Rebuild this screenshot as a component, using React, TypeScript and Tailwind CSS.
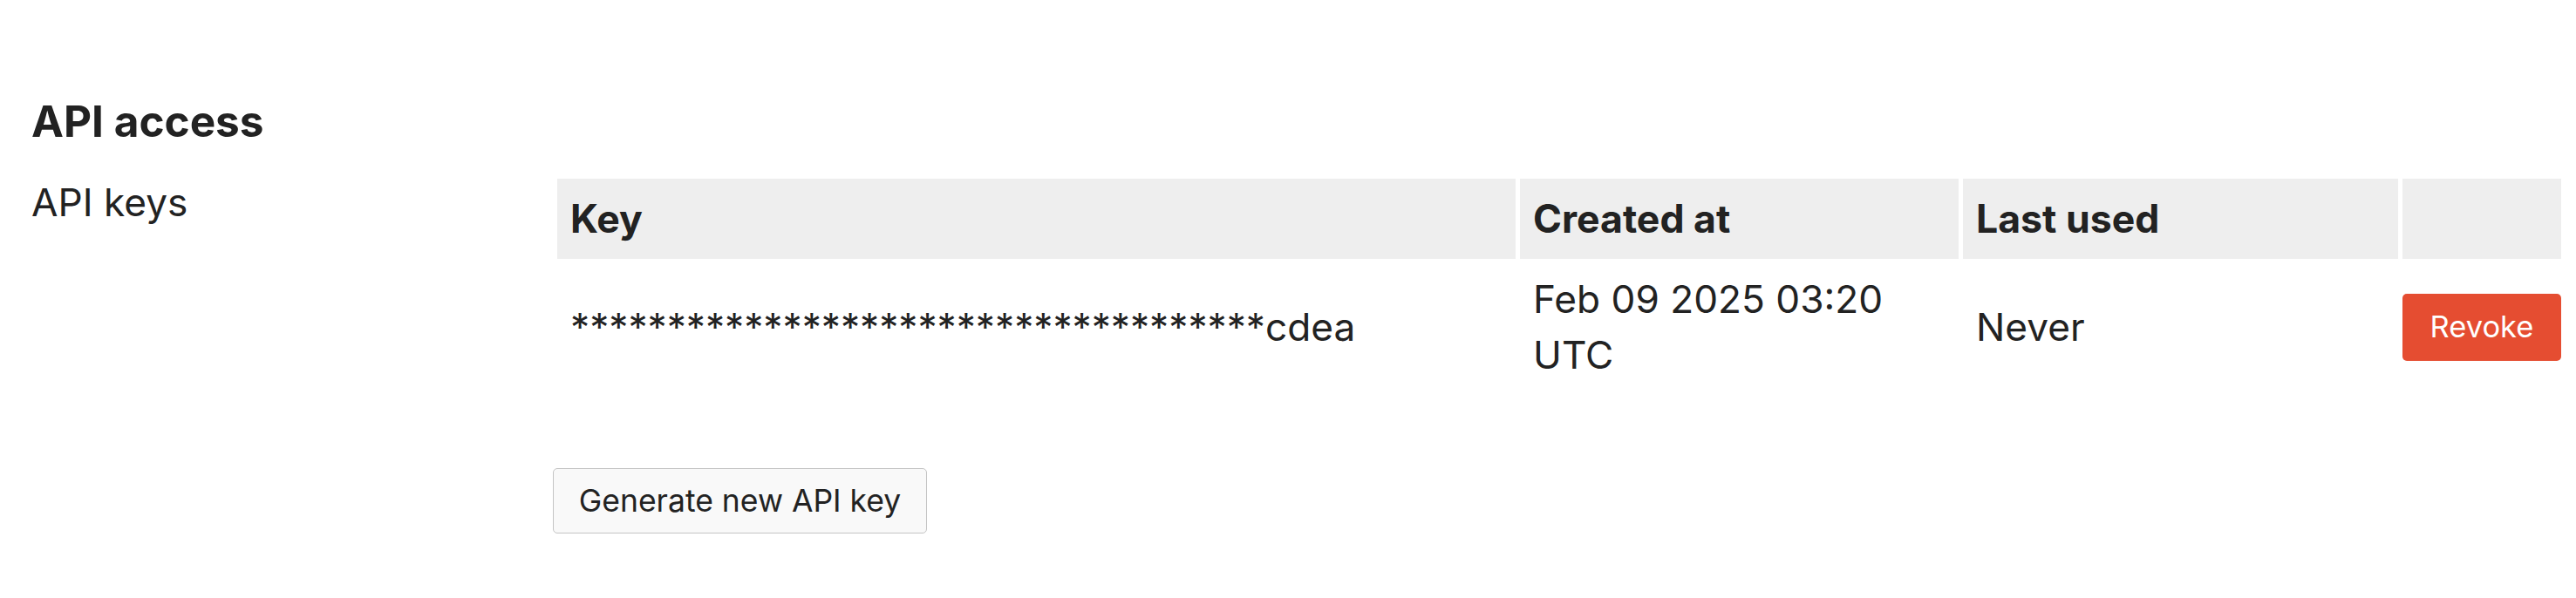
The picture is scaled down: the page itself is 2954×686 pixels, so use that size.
import React from "react";

export default function App() {
  const masked = "*".repeat(36) + "cdea";
  return (
    <div
      className="w-[2954px] min-h-[686px] bg-white text-[#222222] pl-[36px] pr-[12px] pt-[109px]"
      style={{ fontFamily: "Inter, 'Noto Sans', sans-serif" }}
    >
      <h2 className="text-[49.5px] leading-[60px] font-bold">API access</h2>
      <div className="mt-[31px] flex items-start">
        <div className="w-[598px] shrink-0 text-[44.2px] leading-[64px]">API keys</div>
        <div className="flex flex-col">
          <table className="table-fixed w-[2308px] border-separate border-spacing-[5px] text-[44.2px] leading-[64px]">
            <colgroup>
              <col className="w-[1099px]" />
              <col className="w-[503px]" />
              <col className="w-[499px]" />
              <col className="w-[182px]" />
            </colgroup>
            <thead>
              <tr>
                <th className="bg-[#eeeeee] text-left font-bold text-[44.6px] px-[15px] py-[14px]">Key</th>
                <th className="bg-[#eeeeee] text-left font-bold text-[44.6px] px-[15px] py-[14px]">Created at</th>
                <th className="bg-[#eeeeee] text-left font-bold text-[44.6px] px-[15px] py-[14px]">Last used</th>
                <th className="bg-[#eeeeee] p-0"></th>
              </tr>
            </thead>
            <tbody>
              <tr>
                <td className="px-[15px] py-[9px] align-middle">{masked}</td>
                <td className="px-[15px] py-[9px] align-middle">Feb 09 2025 03:20 UTC</td>
                <td className="px-[15px] py-[9px] align-middle">Never</td>
                <td className="p-0 align-middle">
                  <button className="w-full h-[77px] rounded-[5px] bg-[#e54d31] text-white text-[34.5px] leading-none">
                    Revoke
                  </button>
                </td>
              </tr>
            </tbody>
          </table>
          <div className="mt-[84px]">
            <button className="h-[75px] w-[429px] rounded-[5px] border border-[#c4c4c4] bg-[#f9f9f9] text-[35.5px] leading-none text-[#222222]">
              Generate new API key
            </button>
          </div>
        </div>
      </div>
    </div>
  );
}
